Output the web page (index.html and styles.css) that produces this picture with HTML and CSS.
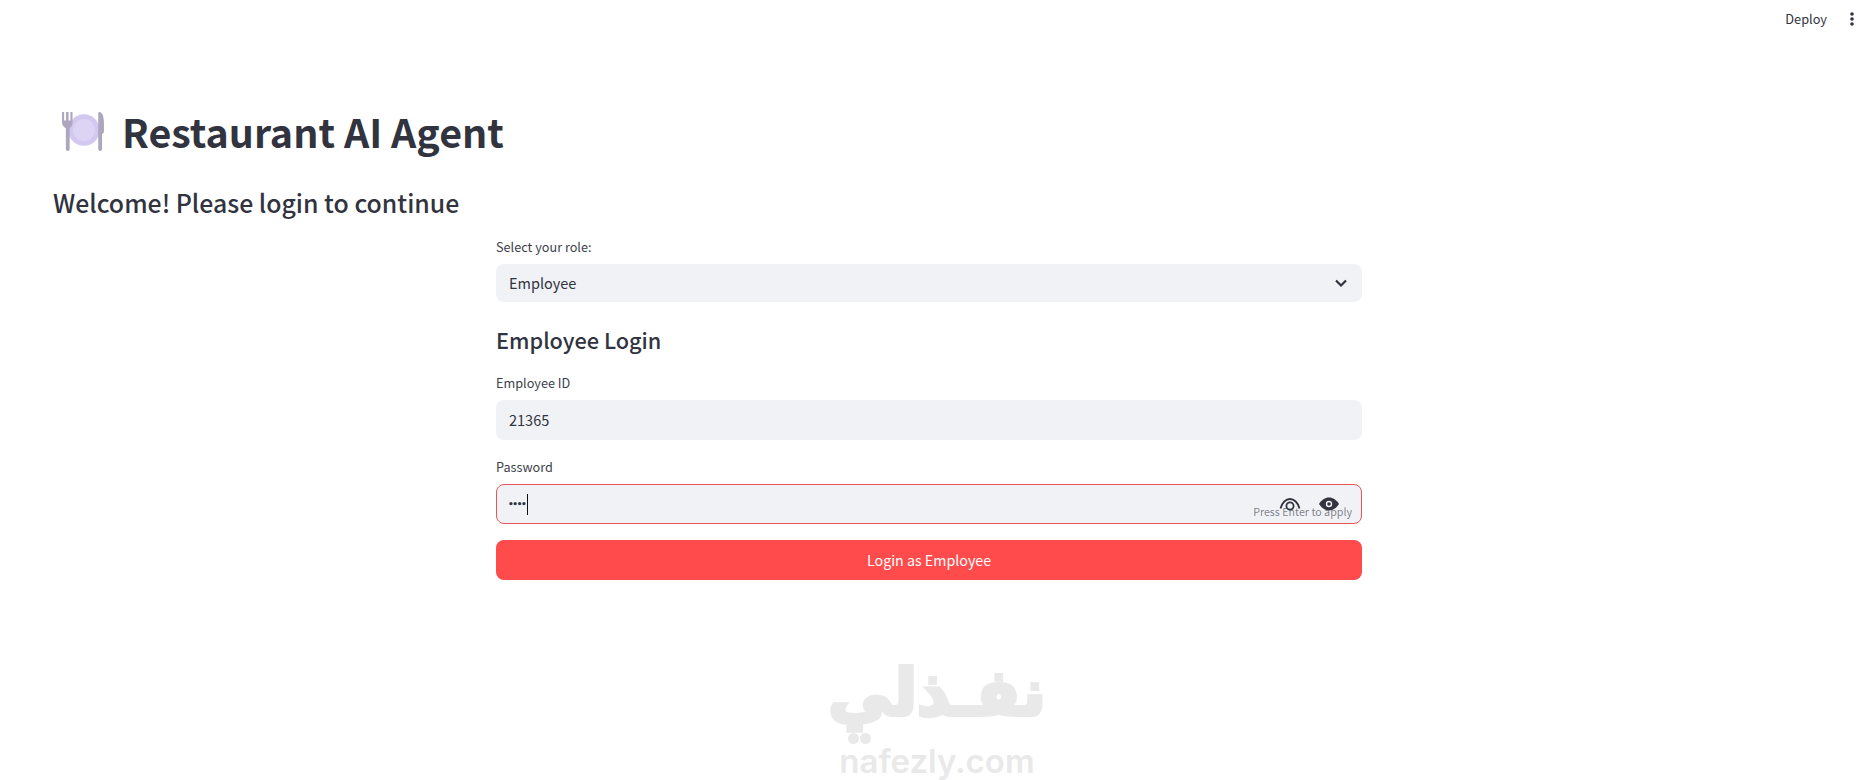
FILE: index.html
```html
<!DOCTYPE html>
<html lang="en">
<head>
    <meta charset="UTF-8">
    <meta name="viewport" content="width=device-width, initial-scale=1.0">
    <title>Restaurant AI Agent</title>
    <link rel="stylesheet" href="styles.css">
</head>
<body>

<header class="topbar">
    <span class="deploy">Deploy</span>
    <svg class="menu-dots" width="16" height="16" viewBox="0 0 16 16"><circle cx="8" cy="3" r="1.8"/><circle cx="8" cy="8" r="1.8"/><circle cx="8" cy="13" r="1.8"/></svg>
</header>

<main class="main">
    <h1 class="title">
        <svg class="plate-icon" width="46" height="40" viewBox="0 0 46 42">
            <circle cx="24" cy="20" r="16.500" fill="#d3c8ef"/>
            <circle cx="24" cy="20" r="11.500" fill="#dcd4f4"/>
            <path d="M1 1h2.200v9h2V1h2.600v9h2V1H12v11c0 3-1.500 5-3 6v22a2 2 0 0 1-4 0V18C3 17 1 15 1 12z" fill="#aca6bf"/>
            <path d="M40 1c3 0 5 4 5 12v8c0 2-1 3-2 3v16a2 2 0 0 1-4 0V2c0-.6.400-1 1-1z" fill="#aca6bf"/>
        </svg>
        <span>Restaurant AI Agent</span>
    </h1>
    <h2 class="welcome">Welcome! Please login to continue</h2>

    <section class="login">
        <label class="field-label">Select your role:</label>
        <div class="select">
            <span>Employee</span>
            <svg width="16" height="16" viewBox="0 0 16 16"><path d="M3 5.500l5 5 5-5" fill="none" stroke="#31333f" stroke-width="2.200"/></svg>
        </div>

        <h3 class="login-title">Employee Login</h3>

        <label class="field-label">Employee ID</label>
        <div class="input">21365</div>

        <label class="field-label password-label">Password</label>
        <div class="input input-focus">
            <span class="pass-dots">••••</span><span class="caret"></span>
            <div class="input-icons">
                <svg class="eye-open" width="22" height="16" viewBox="0 0 22 16"><path d="M1.500 12.500C3 6.500 7 3 11 3s8 3.500 9.500 9.500" fill="none" stroke="#31333f" stroke-width="1.800"/><circle cx="11" cy="10" r="3.600" fill="none" stroke="#31333f" stroke-width="1.800"/></svg>
                <svg width="22" height="16" viewBox="0 0 22 16"><path d="M1 8c2.500-4 6-6.500 10-6.500S18.500 4 21 8c-2.500 4-6 6.500-10 6.500S3.500 12 1 8z" fill="#31333f"/><circle cx="11" cy="8" r="3.200" fill="#f0f2f6"/><circle cx="11" cy="8" r="1.800" fill="#31333f"/></svg>
            </div>
            <span class="hint">Press Enter to apply</span>
        </div>

        <button class="login-btn">Login as Employee</button>
    </section>
</main>

<div class="watermark">
    <div class="wm-arabic" lang="ar" dir="rtl">نفـذلي</div>
    <div class="wm-latin">nafezly.com<i class="wm-dot wm-dot-a"></i><i class="wm-dot wm-dot-b"></i></div>
</div>

</body>
</html>
```

FILE: styles.css
```css
* {
    box-sizing: border-box;
    margin: 0;
    padding: 0;
}
body {
    background: #fff;
    font-family: "Noto Sans CJK SC", "Noto Sans", sans-serif;
    color: #31333f;
    height: 780px;
    overflow: hidden;
    position: relative;
}
.topbar {
    height: 38px;
    display: flex;
    align-items: center;
    justify-content: flex-end;
    gap: 17px;
    padding-right: 12px;
}
.deploy {
    font-size: 12.750px;
    line-height: 20px;
}
.menu-dots {
    fill: #31333f;
}
.main {
    padding: 66px 53px 0;
}
.title {
    display: flex;
    align-items: center;
    gap: 16px;
    font-size: 39.400px;
    font-weight: 700;
    line-height: 54px;
    padding-left: 7px;
}
.welcome {
    font-size: 24.850px;
    font-weight: 500;
    line-height: 36px;
    margin-top: 26px;
}
.login {
    width: 866px;
    margin-left: 443px;
    margin-top: 17px;
    display: flex;
    flex-direction: column;
}
.field-label {
    font-size: 12.700px;
    line-height: 20px;
    height: 20px;
    margin-bottom: 7px;
    color: #3d3f4b;
}
.select, .input {
    height: 40px;
    background: #f0f2f6;
    border-radius: 8px;
    display: flex;
    align-items: center;
    padding: 0 13px;
    font-size: 14.500px;
    line-height: 22px;
}
.select {
    height: 38px;
    justify-content: space-between;
}
.login-title {
    font-size: 21.700px;
    font-weight: 500;
    line-height: 30px;
    margin-top: 23px;
    margin-bottom: 18px;
}
.password-label {
    margin-top: 17px;
    margin-bottom: 7px;
}
.input-focus {
    border: 1px solid #e8565b;
    padding-left: 11px;
    position: relative;
}
.pass-dots {
    font-size: 9px;
    letter-spacing: -1.400px;
    font-family: "DejaVu Sans", sans-serif;
    font-weight: 700;
}
.caret {
    width: 1px;
    height: 21px;
    background: #111;
    margin-left: 2px;
}
.input-icons {
    position: absolute;
    right: 21px;
    top: 11px;
    display: flex;
    gap: 17px;
    align-items: flex-start;
}
.hint {
    position: absolute;
    right: 9px;
    bottom: 3px;
    font-size: 10.700px;
    line-height: 16px;
    color: rgba(49, 51, 63, 0.6);
}
.login-btn {
    height: 40px;
    margin-top: 16px;
    padding-bottom: 2px;
    border: none;
    border-radius: 8px;
    background: #ff4b4b;
    color: #fff;
    font-family: inherit;
    font-size: 14.250px;
}
.watermark {
    position: absolute;
    left: 807px;
    top: 652px;
    width: 260px;
    text-align: center;
    color: #e9e9e9;
}
.wm-arabic {
    font-family: "DejaVu Sans", sans-serif;
    font-weight: 700;
    font-size: 64px;
    line-height: 82px;
    -webkit-text-stroke: 4px #e9e9e9;
}
.wm-latin {
    font-family: "Inter", sans-serif;
    font-weight: 600;
    font-size: 33px;
    line-height: 36px;
    margin-top: 9px;
    position: relative;
}
.wm-dot {
    position: absolute;
    width: 11px;
    height: 11px;
    border-radius: 50%;
    background: #e9e9e9;
    top: -10px;
}
.wm-dot-a { left: 41px; }
.wm-dot-b { left: 53px; }
```
